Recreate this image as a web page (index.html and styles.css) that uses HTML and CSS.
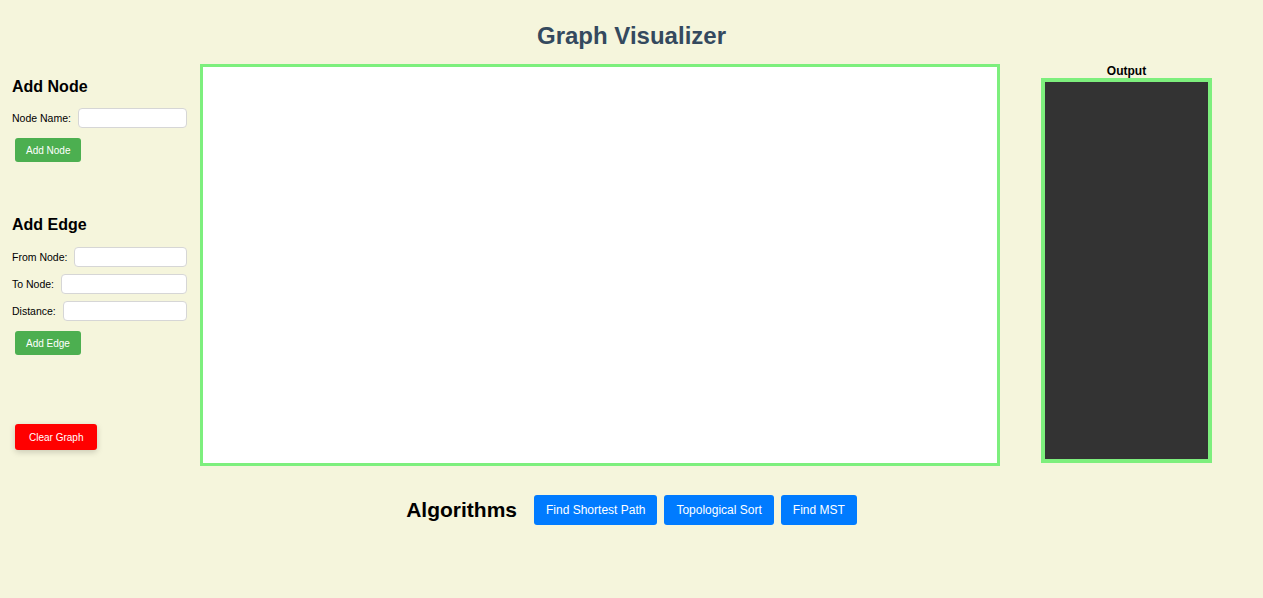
FILE: index.html
```html
<!DOCTYPE html>
<html>
<head>
<meta charset="utf-8">
<title>Graph Visualizer</title>
<link rel="stylesheet" href="styles.css">
</head>
<body>
<header class="header"><h1 class="title">Graph Visualizer</h1></header>
<main class="main">
  <section class="controls">
    <h3 class="section-title first">Add Node</h3>
    <div class="field"><label class="field-label">Node Name:</label><input class="field-input" type="text"></div>
    <button class="btn btn-green">Add Node</button>

    <h3 class="section-title second">Add Edge</h3>
    <div class="field"><label class="field-label">From Node:</label><input class="field-input" type="text"></div>
    <div class="field"><label class="field-label">To Node:</label><input class="field-input" type="text"></div>
    <div class="field"><label class="field-label">Distance:</label><input class="field-input" type="text"></div>
    <button class="btn btn-green">Add Edge</button>

    <button class="btn btn-red">Clear Graph</button>
  </section>
  <div class="canvas"></div>
  <aside class="output-panel">
    <div class="output-label">Output</div>
    <div class="output-box"></div>
  </aside>
</main>
<section class="algorithms">
  <h2 class="algo-title">Algorithms</h2>
  <button class="btn-blue">Find Shortest Path</button>
  <button class="btn-blue">Topological Sort</button>
  <button class="btn-blue">Find MST</button>
</section>
</body>
</html>
```
FILE: styles.css
```css
* { box-sizing: border-box; }
html, body {
  margin: 0;
  background: #f5f5dc;
  font-family: "Liberation Sans", Arial, sans-serif;
}
.header {
  padding-top: 22px;
  text-align: center;
}
.title {
  margin: 0;
  font-size: 24px;
  line-height: 28px;
  font-weight: bold;
  color: #34495e;
}
.main {
  display: flex;
  align-items: flex-start;
  margin-top: 14px;
  padding-left: 12px;
}
.controls {
  width: 175px;
  display: flex;
  flex-direction: column;
  align-items: flex-start;
}
.section-title {
  margin: 0;
  font-size: 16px;
  line-height: 18px;
  font-weight: bold;
  color: #000;
}
.section-title.first { margin-top: 14px; margin-bottom: 12px; }
.section-title.second { margin-top: 54px; margin-bottom: 13px; }
.field {
  display: flex;
  align-items: center;
  width: 100%;
  margin-bottom: 7px;
}
.field-label {
  font-size: 10.5px;
  margin-right: 7px;
  white-space: nowrap;
  color: #000;
}
.field-input {
  flex: 1;
  min-width: 0;
  height: 20px;
  border: 1px solid #d6d6d6;
  border-radius: 4px;
  background: #fff;
  padding: 0 4px;
}
.btn {
  border: none;
  color: #fff;
  font-family: "Liberation Sans", Arial, sans-serif;
  font-size: 10px;
  border-radius: 3px;
  margin-left: 3px;
  cursor: pointer;
}
.btn-green {
  background: #4caf50;
  height: 24px;
  padding: 0 11px;
  margin-top: 3px;
}
.btn-red {
  background: #ff0000;
  height: 26px;
  padding: 0 14px;
  margin-top: 69px;
  box-shadow: 0 2px 6px rgba(0,0,0,0.18);
}
.canvas {
  width: 800px;
  height: 402px;
  margin-left: 13px;
  border: 3px solid #7def7d;
  background: #fff;
}
.output-panel {
  width: 171px;
  margin-left: 41px;
  display: flex;
  flex-direction: column;
}
.output-label {
  text-align: center;
  font-size: 12px;
  font-weight: bold;
  line-height: 14px;
  color: #000;
}
.output-box {
  height: 385px;
  border: 4px solid #7def7d;
  background: #333;
}
.algorithms {
  display: flex;
  justify-content: center;
  align-items: center;
  gap: 7px;
  margin-top: 29px;
}
.algo-title {
  margin: 0 10px 0 0;
  font-size: 21px;
  font-weight: bold;
  color: #000;
}
.btn-blue {
  height: 30px;
  background: #007bff;
  color: #fff;
  border: none;
  border-radius: 3px;
  font-family: "Liberation Sans", Arial, sans-serif;
  font-size: 12px;
  padding: 0 12px;
  cursor: pointer;
}
```
